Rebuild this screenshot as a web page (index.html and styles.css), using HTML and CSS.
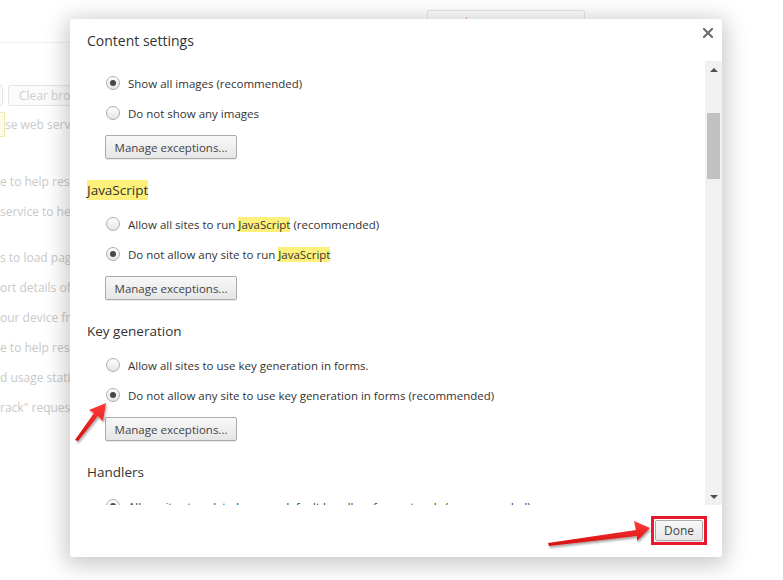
FILE: index.html
```html
<!DOCTYPE html>
<html lang="en">
<head>
<meta charset="utf-8">
<title>Content settings</title>
<link rel="stylesheet" href="styles.css">
</head>
<body>
<div class="page">
  <div class="page-header"><div class="search-box"><span class="caret"></span></div></div>
  <div class="toolbar">
    <span class="bg-btn bg-btn-stub"></span>
    <span class="bg-btn">Clear browsing data...</span>
  </div>
  <div class="notice"><span class="hl-box"></span><span class="bg-text">se web services to improve your browsing experience.</span></div>
  <ul class="bg-lines">
    <li>e to help resolve navigation errors</li>
    <li>service to help complete searches and URLs typed in the address bar</li>
    <li class="gap">s to load pages more quickly</li>
    <li>ort details of possible security incidents to Google</li>
    <li>our device from dangerous sites</li>
    <li>e to help resolve spelling errors</li>
    <li>d usage statistics and crash reports to Google</li>
    <li>rack" request with your browsing traffic</li>
  </ul>
</div>

<div class="dialog">
  <div class="dlg-head">
    <h1 class="dlg-title">Content settings</h1>
    <svg class="close" width="10" height="10" viewBox="0 0 10 10"><path d="M1 1L9 9M9 1L1 9" stroke="#6e6e6e" stroke-width="2.2" stroke-linecap="square"/></svg>
  </div>
  <div class="dlg-body">
    <div class="scroll-content">
      <div class="radio-row"><span class="radio checked"></span><span class="label">Show all images (recommended)</span></div>
      <div class="radio-row"><span class="radio"></span><span class="label">Do not show any images</span></div>
      <button class="btn manage">Manage exceptions...</button>

      <h2 class="section"><span class="hl">JavaScript</span></h2>
      <div class="radios">
        <div class="radio-row"><span class="radio"></span><span class="label">Allow all sites to run <span class="hl">JavaScript</span> (recommended)</span></div>
        <div class="radio-row"><span class="radio checked"></span><span class="label">Do not allow any site to run <span class="hl">JavaScript</span></span></div>
      </div>
      <button class="btn manage">Manage exceptions...</button>

      <h2 class="section">Key generation</h2>
      <div class="radios">
        <div class="radio-row"><span class="radio"></span><span class="label">Allow all sites to use key generation in forms.</span></div>
        <div class="radio-row"><span class="radio checked"></span><span class="label">Do not allow any site to use key generation in forms (recommended)</span></div>
      </div>
      <button class="btn manage">Manage exceptions...</button>

      <h2 class="section">Handlers</h2>
      <div class="radios">
        <div class="radio-row"><span class="radio checked"></span><span class="label">Allow sites to ask to become default handlers for protocols (recommended)</span></div>
        <div class="radio-row"><span class="radio"></span><span class="label">Do not allow any site to handle protocols</span></div>
      </div>
    </div>
    <div class="scrollbar">
      <div class="sb-btn"><span class="tri-up"></span></div>
      <div class="sb-track"><div class="sb-thumb"></div></div>
      <div class="sb-btn"><span class="tri-down"></span></div>
    </div>
  </div>
  <div class="dlg-foot">
    <span class="mark-box"><button class="btn done">Done</button></span>
  </div>
</div>

<svg class="annotations" width="783" height="580" viewBox="0 0 783 580">
  <defs>
    <linearGradient id="ar" x1="0" y1="0" x2="0" y2="1">
      <stop offset="0" stop-color="#ff3b3b"/>
      <stop offset="1" stop-color="#d40f0f"/>
    </linearGradient>
    <filter id="sh" x="-20%" y="-50%" width="140%" height="200%">
      <feDropShadow dx="1" dy="2" stdDeviation="1.2" flood-color="#000" flood-opacity="0.35"/>
    </filter>
  </defs>
  <polygon filter="url(#sh)" fill="url(#ar)" points="548,543 636,530 634,521 650,528 637,541 637,536 549,546"/>
  <polygon filter="url(#sh)" fill="url(#ar)" points="75,440 94,413 89,410 106,403 103,421 98,416 78,441"/>
</svg>
</body>
</html>
```

FILE: styles.css
```css
* { box-sizing: border-box; }

html, body {
  margin: 0;
  padding: 0;
}

body {
  width: 783px;
  height: 580px;
  overflow: hidden;
  position: relative;
  background: #ffffff;
  font-family: "Open Sans", "Noto Sans", "DejaVu Sans", sans-serif;
  color: #333333;
}

/* ---------- faded background page ---------- */
.page {
  color: #c9c9c9;
  font-size: 12px;
}

.page-header {
  width: 700px;
  height: 43px;
  border-bottom: 1px solid #f1f1f1;
  display: flex;
  padding-top: 10px;
}

.search-box {
  margin-left: 427px;
  width: 158px;
  height: 28px;
  border: 1px solid #e4e4e4;
  border-radius: 2px;
  position: relative;
}

.caret {
  position: absolute;
  left: 38px;
  top: 6px;
  width: 1px;
  height: 4px;
  background: #f2b5b5;
}

.toolbar {
  display: flex;
  gap: 5px;
  padding-top: 42px;
}

.bg-btn {
  flex: none;
  height: 21px;
  line-height: 19px;
  border: 1px solid #e6e6e6;
  border-radius: 2px;
  padding: 0 10px;
  white-space: nowrap;
  color: #cfcfcf;
  background: #fbfbfb;
}

.bg-btn-stub {
  width: 60px;
  margin-left: -57px;
}

.notice {
  display: flex;
  align-items: center;
  height: 25px;
  margin-top: 6px;
}

.hl-box {
  flex: none;
  width: 5px;
  height: 25px;
  background: #fffbe6;
  border: 1px solid #f5e7b0;
  border-left: none;
}

.bg-text {
  white-space: nowrap;
}

.bg-lines {
  list-style: none;
  margin: 30px 0 0 0;
  padding: 0;
}

.bg-lines li {
  line-height: 30px;
  height: 30px;
  white-space: nowrap;
}

.bg-lines li.gap {
  margin-top: 16px;
}

/* ---------- dialog ---------- */
.dialog {
  position: absolute;
  left: 70px;
  top: 19px;
  width: 652px;
  height: 538px;
  background: #ffffff;
  border-radius: 2px;
  box-shadow: 0 4px 22px 4px rgba(0, 0, 0, 0.22);
  display: flex;
  flex-direction: column;
}

.dlg-head {
  height: 42px;
  display: flex;
  align-items: flex-start;
  padding-left: 17px;
}

.dlg-title {
  margin: 12px 0 0 0;
  font-size: 14px;
  line-height: 20px;
  font-weight: normal;
  color: #333333;
}

.close {
  margin-left: auto;
  margin-top: 9px;
  margin-right: 9px;
}

.dlg-body {
  height: 444px;
  display: flex;
}

.scroll-content {
  flex: 1;
  overflow: hidden;
  padding: 7px 0 0 17px;
  font-size: 11.5px;
}

.radio-row {
  height: 30px;
  display: flex;
  align-items: center;
  padding-left: 19px;
  white-space: nowrap;
}

.radio {
  width: 14px;
  height: 14px;
  flex: none;
  border-radius: 50%;
  border: 1px solid #adadad;
  background: linear-gradient(#fefefe, #e4e4e4);
  box-shadow: inset 0 1px 1px rgba(255, 255, 255, 0.8);
  display: flex;
  align-items: center;
  justify-content: center;
}

.radio.checked::after {
  content: "";
  width: 6px;
  height: 6px;
  border-radius: 50%;
  background: #474747;
}

.label {
  margin-left: 8px;
  color: #333333;
}

.hl {
  background: #fdf17c;
}

.btn {
  font-family: inherit;
  font-size: 11.5px;
  color: #444444;
  border: 1px solid #ababab;
  border-radius: 2px;
  background: linear-gradient(#f8f8f8, #e6e6e6);
  box-shadow: 0 1px 0 rgba(0, 0, 0, 0.08);
  padding: 0 10px;
  margin: 0;
}

.manage {
  display: block;
  width: 132px;
  padding: 0;
  height: 24px;
  margin: 7px 0 0 18px;
}

.section {
  margin: 21px 0 0 0;
  height: 20px;
  line-height: 20px;
  font-size: 13.5px;
  font-weight: normal;
  color: #333333;
}

.section .hl {
  display: inline-block;
  height: 20px;
}

.radios {
  margin-top: 9px;
}

/* scrollbar */
.scrollbar {
  width: 17px;
  background: #f1f1f1;
  display: flex;
  flex-direction: column;
}

.sb-btn {
  height: 17px;
  display: flex;
  align-items: center;
  justify-content: center;
}

.tri-up {
  width: 0;
  height: 0;
  border-left: 4px solid transparent;
  border-right: 4px solid transparent;
  border-bottom: 4px solid #505050;
}

.tri-down {
  width: 0;
  height: 0;
  border-left: 4px solid transparent;
  border-right: 4px solid transparent;
  border-top: 4px solid #505050;
}

.sb-track {
  flex: 1;
}

.sb-thumb {
  margin: 35px 2px 0 2px;
  height: 66px;
  background: #c1c1c1;
}

/* footer */
.dlg-foot {
  flex: 1;
  display: flex;
  justify-content: flex-end;
  align-items: flex-start;
  padding: 11px 15px 0 0;
}

.mark-box {
  display: block;
  border: 3px solid #e8192c;
  padding: 1px;
}

.done {
  display: block;
  width: 48px;
  height: 21px;
  padding: 0;
  font-size: 12px;
}

/* annotations */
.annotations {
  position: absolute;
  left: 0;
  top: 0;
  pointer-events: none;
}
```
